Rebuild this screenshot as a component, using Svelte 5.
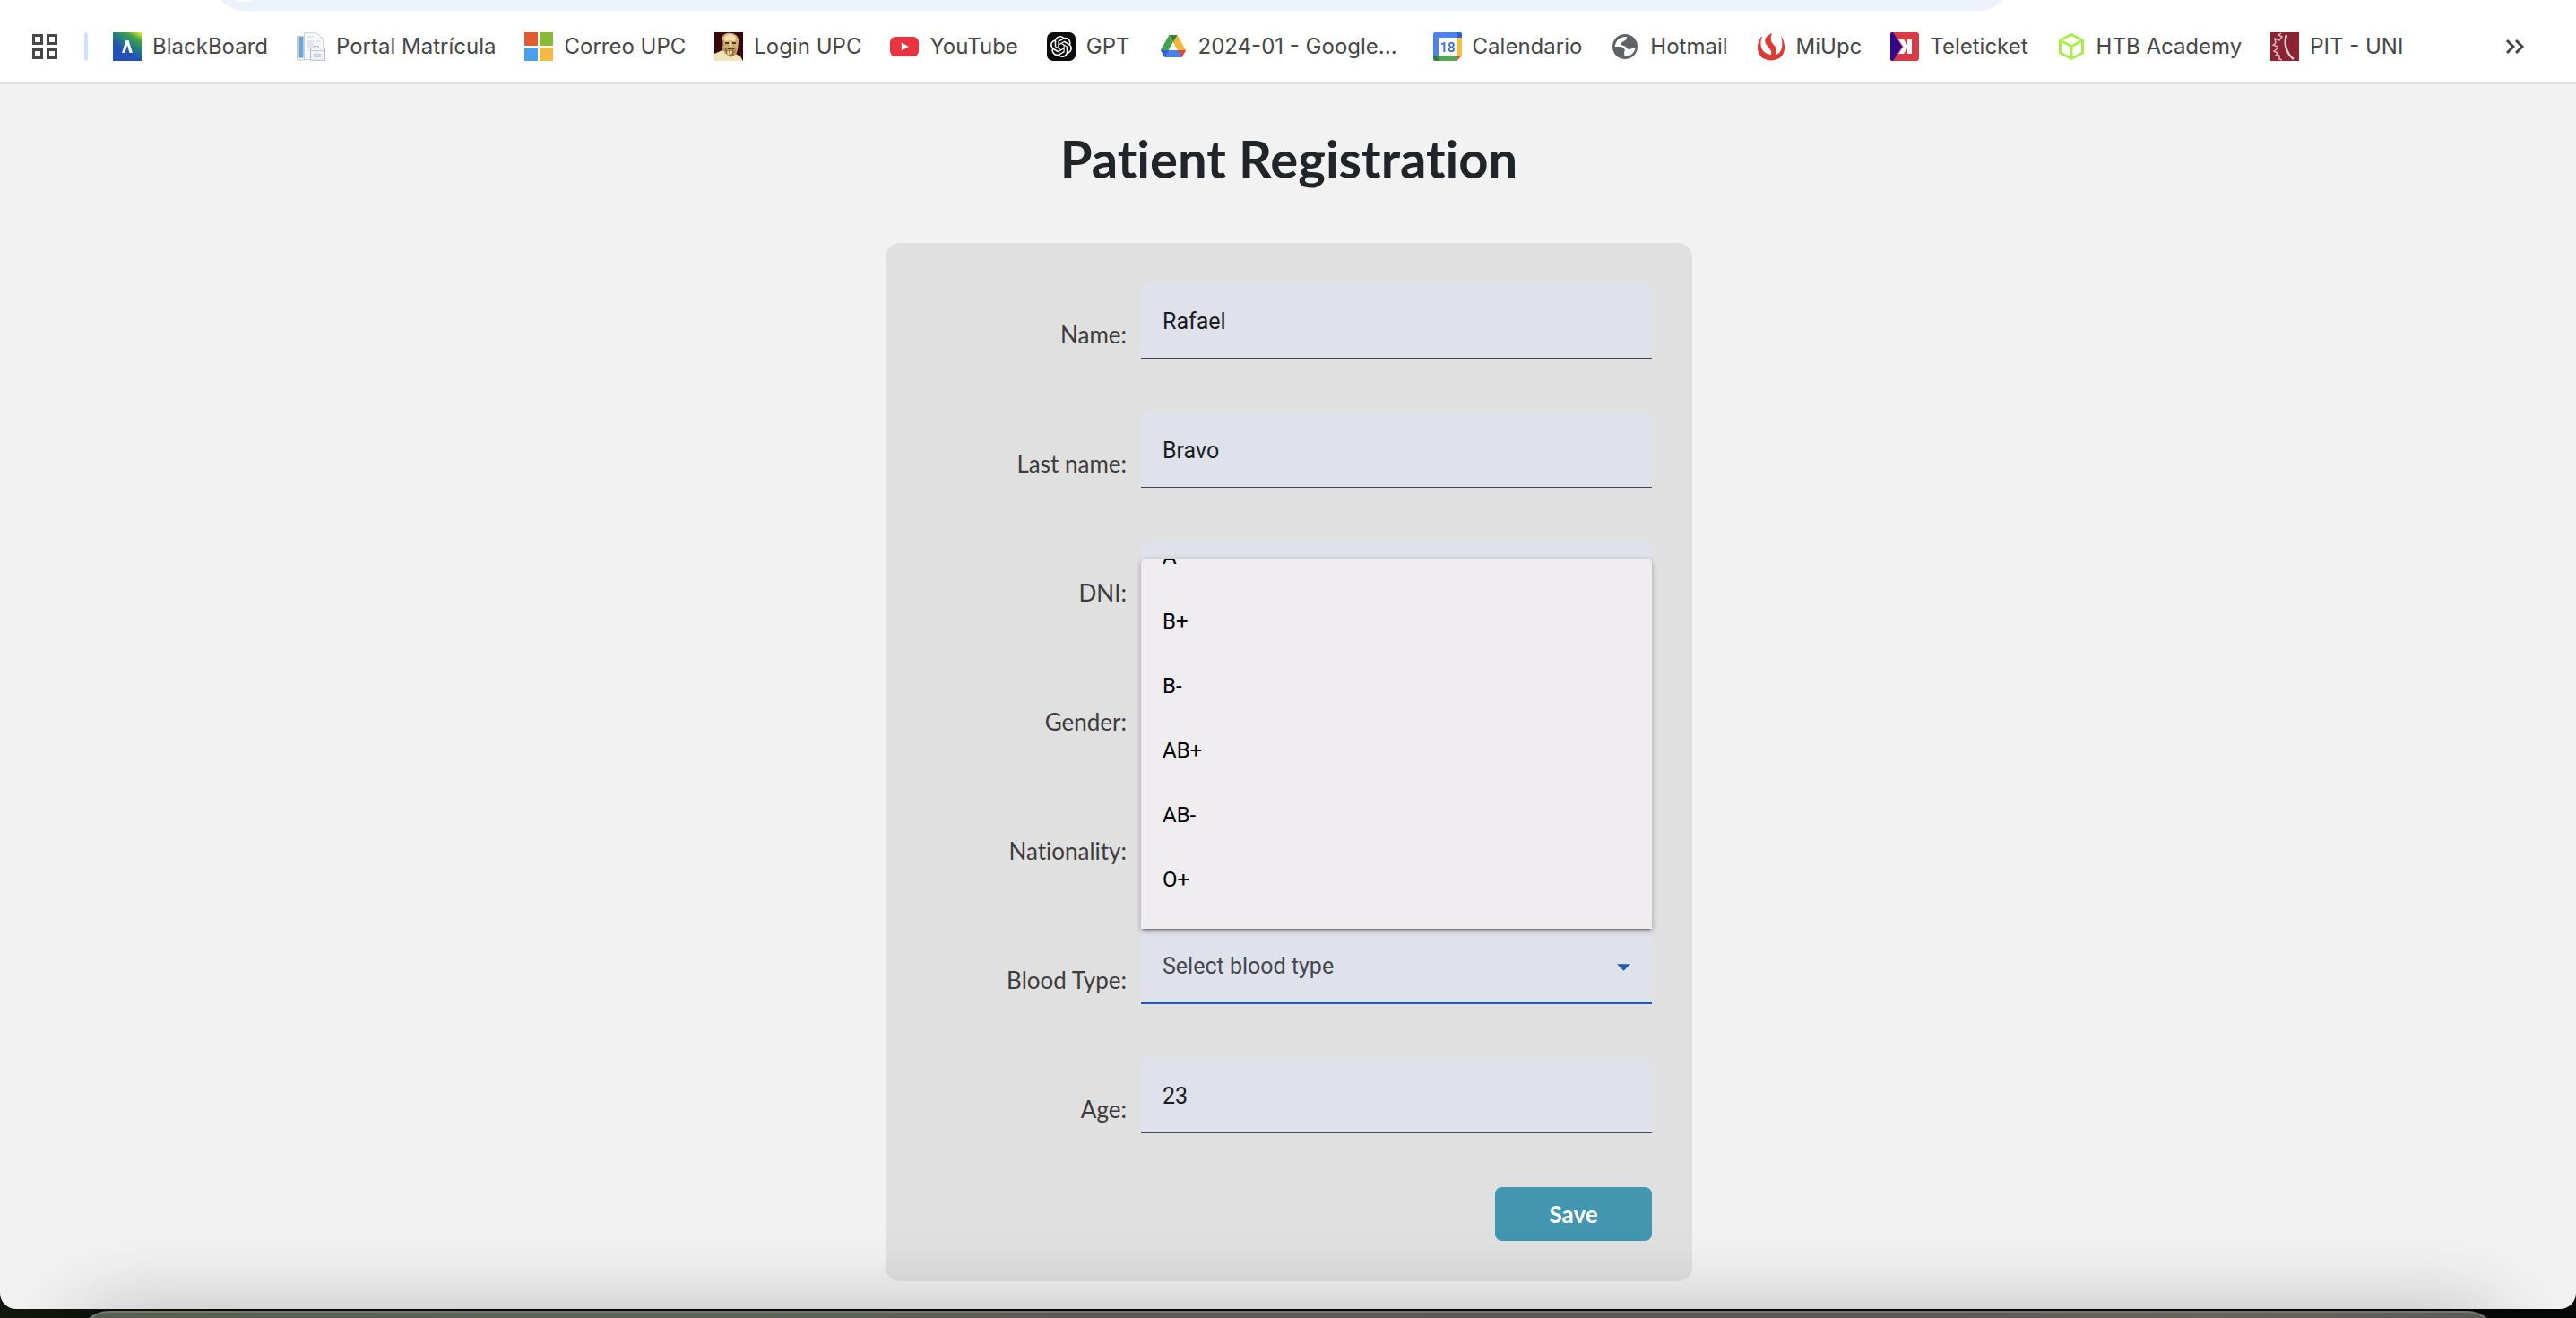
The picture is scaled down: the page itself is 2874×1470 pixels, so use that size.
<script>
  import { onMount } from 'svelte';

  const bookmarks = [
    { icon: 'blackboard', label: 'BlackBoard' },
    { icon: 'portal', label: 'Portal Matrícula' },
    { icon: 'microsoft', label: 'Correo UPC' },
    { icon: 'socrates', label: 'Login UPC' },
    { icon: 'youtube', label: 'YouTube' },
    { icon: 'gpt', label: 'GPT' },
    { icon: 'drive', label: '2024-01 - Google...' },
    { icon: 'calendar', label: 'Calendario' },
    { icon: 'globe', label: 'Hotmail' },
    { icon: 'miupc', label: 'MiUpc' },
    { icon: 'teleticket', label: 'Teleticket' },
    { icon: 'htb', label: 'HTB Academy' },
    { icon: 'uni', label: 'PIT - UNI' }
  ];

  const fields = [
    { id: 'name', label: 'Name:', value: 'Rafael' },
    { id: 'last-name', label: 'Last name:', value: 'Bravo' },
    { id: 'dni', label: 'DNI:', value: '' },
    { id: 'gender', label: 'Gender:', value: '' },
    { id: 'nationality', label: 'Nationality:', value: '' },
    { id: 'blood-type', label: 'Blood Type:', value: '', select: true },
    { id: 'age', label: 'Age:', value: '23' }
  ];

  const bloodTypes = ['A+', 'A-', 'B+', 'B-', 'AB+', 'AB-', 'O+', 'O-'];
  let menu;

  onMount(() => {
    menu.scrollTop = 122;
  });
</script>

{#snippet icon(name)}
  <svg class="icon" viewBox="0 0 32 32" aria-hidden="true">
    {#if name === 'blackboard'}
      <defs>
        <linearGradient id="bb" x1="0.3" y1="1" x2="0.9" y2="0">
          <stop offset="0.3" stop-color="#2150b8" />
          <stop offset="0.55" stop-color="#267c80" />
          <stop offset="0.8" stop-color="#43a047" />
          <stop offset="1" stop-color="#c8e63c" />
        </linearGradient>
      </defs>
      <rect width="32" height="32" fill="url(#bb)" />
      <path d="M10 23 14.5 9h3L22 23h-3.5L16 14l-2.6 9z" fill="#fff" />
    {:else if name === 'portal'}
      <path d="M.5 4.5h8V31H.5z" fill="#f6f7f9" stroke="#c3c8cf" />
      <path d="M2.5 5h5v23.5h-5z" fill="#6fa4d6" />
      <path d="M8.5.7h13l8 6.5v23.3h-21z" fill="#f8f9fb" stroke="#ccd0d8" />
      <path d="M21.5.7v6.5h8z" fill="#fff" stroke="#ccd0d8" />
      <path d="M12 5h7M12 10h6v6h-6zM22 10h5M12 20h2" fill="#e3e6ec" stroke="#e3e6ec" stroke-width="2" />
      <path d="M15.5 17.5h4v-2h5v2h7v13.800h-16z" fill="#f1f2f5" stroke="#b5bac2" />
      <path d="M15.5 20.5h16M19.500 24.500h7v3h-7z" fill="#dcdfe5" stroke="#c6cad1" />
    {:else if name === 'microsoft'}
      <path d="M0 0h15v15H0z" fill="#e25c33" />
      <path d="M17 0h15v15H17z" fill="#8ab935" />
      <path d="M0 17h15v15H0z" fill="#4aa1e9" />
      <path d="M17 17h15v15H17z" fill="#f6ba42" />
    {:else if name === 'socrates'}
      <rect width="32" height="32" fill="#380709" />
      <path d="M0 32v-8l9-4 5 3h8l7 4 3 5z" fill="#f1e3ba" />
      <path d="M8 10C8 3 12 .8 17 .8S28 4 27 11l-1 8-2 6-6 2-6-3-4-7z" fill="#cfae74" />
      <path d="M11 7c1-5 10-7 13-1l-1 4-5-1-6 1z" fill="#f3e0ae" />
      <path d="M8 9l2 2v6l4 1 4-1 7 1-2 7-5 3-5-4-4-7z" fill="#b08a52" />
      <path d="M12 12h4m4 0h4M15 18h7" stroke="#5c3519" stroke-width="2" fill="none" />
      <path d="M12 17l2 6m3-3v6m4-6-1 6M9 9l1 6" stroke="#7a5228" stroke-width="1" />
      <path d="M18 10v6M15 21l1 4m3-4v3" stroke="#ecd49c" stroke-width="2" />
    {:else if name === 'youtube'}
      <rect y="5" width="32" height="22" rx="6" fill="#eb323f" />
      <path d="M12.800 11.500v9l8-4.500z" fill="#fff" />
    {:else if name === 'gpt'}
      <rect width="32" height="32" rx="7" fill="#0b0b0b" />
      <path transform="translate(4 4)" fill="#fff" d="M22.2819 9.8211a5.9847 5.9847 0 0 0-.5157-4.9108 6.0462 6.0462 0 0 0-6.5098-2.9A6.0651 6.0651 0 0 0 4.9807 4.1818a5.9847 5.9847 0 0 0-3.9977 2.9 6.0462 6.0462 0 0 0 .7427 7.0966 5.98 5.98 0 0 0 .511 4.9107 6.051 6.051 0 0 0 6.5146 2.9001A5.9847 5.9847 0 0 0 13.2599 24a6.0557 6.0557 0 0 0 5.7718-4.2058 5.9894 5.9894 0 0 0 3.9977-2.9001 6.0557 6.0557 0 0 0-.7475-7.0729zm-9.022 12.6081a4.4755 4.4755 0 0 1-2.8764-1.0408l.1419-.0804 4.7783-2.7582a.7948.7948 0 0 0 .3927-.6813v-6.7369l2.02 1.1686a.071.071 0 0 1 .038.052v5.5826a4.504 4.504 0 0 1-4.4945 4.4944zm-9.6607-4.1254a4.4708 4.4708 0 0 1-.5346-3.0137l.142.0852 4.783 2.7582a.7712.7712 0 0 0 .7806 0l5.8428-3.3685v2.3324a.0804.0804 0 0 1-.0332.0615L9.74 19.9502a4.4992 4.4992 0 0 1-6.1408-1.6464zM2.3408 7.8956a4.485 4.485 0 0 1 2.3655-1.9728V11.6a.7664.7664 0 0 0 .3879.6765l5.8144 3.3543-2.0201 1.1685a.0757.0757 0 0 1-.071 0l-4.8303-2.7865A4.504 4.504 0 0 1 2.3408 7.872zm16.5963 3.8558L13.1038 8.364 15.1192 7.2a.0757.0757 0 0 1 .071 0l4.8303 2.7913a4.4944 4.4944 0 0 1-.6765 8.1042v-5.6772a.79.79 0 0 0-.407-.667zm2.0107-3.0231l-.142-.0852-4.7735-2.7818a.7759.7759 0 0 0-.7854 0L9.409 9.2297V6.8974a.0662.0662 0 0 1 .0284-.0615l4.8303-2.7866a4.4992 4.4992 0 0 1 6.6802 4.66zM8.3065 12.863l-2.02-1.1638a.0804.0804 0 0 1-.038-.0567V6.0742a4.4992 4.4992 0 0 1 7.3757-3.4537l-.142.0805L8.704 5.459a.7948.7948 0 0 0-.3927.6813zm1.0976-2.3654l2.602-1.4998 2.6069 1.4998v2.9994l-2.5974 1.4997-2.6067-1.4997Z" />
    {:else if name === 'drive'}
      <path d="M11.5 3h9L16 10.5 6.5 27 2 19.5z" fill="#43a253" />
      <path d="M20.5 3 30 20h-9.200L11.500 3.700z" fill="#f5b63a" />
      <path d="M11.5 3h9L16 10.800z" fill="#2a823d" />
      <path d="M2 20h28l-4.500 8h-19z" fill="#4a80ec" />
      <path d="M2 20h9.300l-4.800 8z" fill="#3264d4" />
      <path d="M20.800 20H30l-4.500 8z" fill="#df4937" />
    {:else if name === 'calendar'}
      <path d="M2 0h24v6H6v20H0V2a2 2 0 0 1 2-2z" fill="#4e82ee" />
      <path d="M26 0h4a2 2 0 0 1 2 2v4h-6z" fill="#2b62cb" />
      <path d="M26 6h6v20h-6z" fill="#f2c146" />
      <path d="M6 26h20v6H6z" fill="#53a557" />
      <path d="M0 26h6v6H2a2 2 0 0 1-2-2z" fill="#38803f" />
      <path d="M26 26h6l-6 6z" fill="#df4b3d" />
      <path d="M6 6h20v20H6z" fill="#fff" />
      <text x="16" y="22" text-anchor="middle" class="day">18</text>
    {:else if name === 'globe'}
      <circle cx="16" cy="16" r="14" fill="#5f6368" />
      <path d="M18 5C10 4.500 5 10 4.800 16h6.700c3 1 5 3 4 5s0 4 0 6C22 27 27 23 27.500 17l-4 1c-2 2-5 1-6-1s-4-2-6-3 1-3 3-4 4-2 3.500-5z" fill="#fff" />
    {:else if name === 'miupc'}
      <path d="M5 5C-2 14-1 31 16 31.500 33 31 34 14 27 4c3 10 1 20-6 21 2-4 1-8-2-11-4-4-4-8-2-13-7 3-10 8-6 13 3 4 6 6 5 11-10-1-14-10-10-20z" fill="#dc3a34" />
    {:else if name === 'teleticket'}
      <rect width="32" height="32" rx="3" fill="#d83b46" />
      <path d="M3 0 13 16 3 32H2a2 2 0 0 1-2-2V2a2 2 0 0 1 2-2z" fill="#32058c" />
      <path d="M24 8v16h-5v-6l-4 6H9l5.500-8L9 8h6l4 6V8z" fill="#fff" />
    {:else if name === 'htb'}
      <path d="M16 2.500 28.500 9v14L16 29.500 3.500 23V9zM3.500 9 16 15.800 28.500 9M16 15.800v13.500" fill="none" stroke="#a9ec4b" stroke-width="3" stroke-linejoin="round" />
    {:else if name === 'uni'}
      <rect width="32" height="32" fill="#8a2430" />
      <path d="M12 1 9 3l4 2-3 4-5-2 1 5-3 2 5 2M8 18l-4 3 4 2-2 3 4 0 0 4 3 1" fill="none" stroke="#d9b9bd" stroke-width="1.500" />
      <path d="M18 3c-3 9-1 20 8 27" fill="none" stroke="#e2cdd0" stroke-width="2.500" />
    {/if}
  </svg>
{/snippet}

<div class="shell">
  <div class="window">
    <div class="toolbar">
      <div class="omnibox"><span class="site-info"></span></div>
    </div>

    <nav class="bookmarks" aria-label="Bookmarks">
      <button class="plain" aria-label="Apps">
        <svg class="icon" viewBox="0 0 32 32">
          <path d="M3.500 3.500h9v9h-9zM19.500 3.500h9v9h-9zM3.500 19.500h9v9h-9zM19.500 19.500h9v9h-9z" fill="none" stroke="#474747" stroke-width="3" />
        </svg>
      </button>
      <span class="separator"></span>
      <div class="links">
        {#each bookmarks as mark}
          <a href="#{mark.icon}">{@render icon(mark.icon)}<span>{mark.label}</span></a>
        {/each}
      </div>
      <button class="plain" aria-label="More bookmarks">
        <svg class="icon" viewBox="0 0 32 32">
          <path d="m7 9 7 7-7 7M17 9l7 7-7 7" fill="none" stroke="#474747" stroke-width="3" />
        </svg>
      </button>
    </nav>

    <main>
      <h1>Patient Registration</h1>
      <form onsubmit={(event) => event.preventDefault()}>
        {#each fields as field}
          <div class="row">
            <label for={field.id}>{field.label}</label>
            {#if field.select}
              <div class="control">
                <select id={field.id}>
                  <option value="">Select blood type</option>
                  {#each bloodTypes as type}
                    <option>{type}</option>
                  {/each}
                </select>
                <svg class="arrow" viewBox="0 0 16 8" aria-hidden="true"><path d="M0 0h16L8 8z" fill="#225ab7" /></svg>
                <ul class="menu" role="listbox" aria-label="Blood type" bind:this={menu}>
                  {#each bloodTypes as type}
                    <li role="option" aria-selected="false">{type}</li>
                  {/each}
                </ul>
              </div>
            {:else}
              <div class="control"><input id={field.id} type="text" value={field.value} /></div>
            {/if}
          </div>
        {/each}
        <button class="save" type="submit">Save</button>
      </form>
    </main>
  </div>
  <div class="desktop"><div class="dock"></div></div>
</div>

<style>
  :global(body) {
    margin: 0;
    background: #080b08;
  }
  .shell,
  .shell * {
    box-sizing: border-box;
  }
  .shell {
    display: flex;
    flex-direction: column;
    min-height: 100vh;
    overflow: hidden;
    background: linear-gradient(90deg, #12170f, #070b06 10%, #040706);
  }
  .window {
    flex: 1;
    background: #f2f2f2;
    border-radius: 0 0 18px 18px;
    overflow: hidden;
  }
  .toolbar {
    height: 12px;
    display: flex;
    align-items: flex-end;
    background: #fff;
    padding: 0 632px 0 238px;
  }
  .omnibox {
    flex: 1;
    height: 68px;
    padding: 10px;
    border-radius: 34px;
    background: #edf1fa;
  }
  .site-info {
    display: block;
    width: 48px;
    height: 48px;
    border-radius: 50%;
    background: #fff;
  }
  .bookmarks {
    display: flex;
    align-items: center;
    height: 82px;
    padding: 0 52px 0 34px;
    background: #fff;
    border-bottom: 2px solid #e0e0e0;
  }
  .icon {
    display: block;
    width: 32px;
    height: 32px;
    flex: none;
  }
  .day {
    font: 500 15px Roboto, sans-serif;
    fill: #3267d6;
  }
  .plain {
    padding: 0;
    border: 0;
    background: none;
  }
  .separator {
    width: 4px;
    height: 32px;
    margin: 0 28px;
    border-radius: 2px;
    background: #d3e0fb;
  }
  .links {
    flex: 1;
    display: flex;
    gap: 32px;
  }
  .links a {
    display: flex;
    align-items: center;
    gap: 12px;
    color: #474747;
    font: 24px/32px Inter, sans-serif;
    text-decoration: none;
    white-space: nowrap;
  }
  .links a:nth-child(7) {
    min-width: 274px;
  }
  main {
    padding: 48px 22px 31px 24px;
  }
  h1 {
    margin: 0 0 59px;
    text-align: center;
    color: #212529;
    font: 700 58px/70px Lato, sans-serif;
    font-variant-ligatures: none;
  }
  form {
    display: flex;
    flex-direction: column;
    gap: 60px;
    max-width: 900px;
    margin: 0 auto;
    padding: 45px;
    border-radius: 16px;
    background: #e0e0e0;
  }
  .row {
    display: grid;
    grid-template-columns: 1fr 570px;
    gap: 16px;
  }
  label {
    padding-top: 41px;
    text-align: right;
    color: #3c3c3c;
    font: 26px/32px Lato, sans-serif;
    font-variant-ligatures: none;
  }
  .control {
    position: relative;
  }
  input,
  select {
    display: block;
    width: 100%;
    height: 84px;
    padding: 1px 24px 0;
    border: 0;
    border-bottom: 1px solid #44474e;
    border-radius: 6px 6px 0 0;
    outline: 0;
    background: #dfe2eb;
    color: #1a1b1f;
    font: 25px/36px Roboto, sans-serif;
    appearance: none;
  }
  select {
    padding-top: 3px;
    border-bottom: 3px solid #225ab7;
    color: #44474e;
  }
  .arrow {
    position: absolute;
    right: 24px;
    top: 39px;
    width: 15px;
    height: 8px;
  }
  .menu {
    position: absolute;
    left: 0;
    right: 0;
    bottom: 100%;
    height: 413px;
    margin: 0;
    padding: 12px 0;
    overflow-y: auto;
    scrollbar-width: none;
    list-style: none;
    border-radius: 6px 6px 0 0;
    background: #efedf0;
    box-shadow: 0 3px 2px -2px rgba(0, 0, 0, 0.4), 0 2px 6px rgba(0, 0, 0, 0.3);
  }
  .menu li {
    padding: 0 24px;
    color: #000;
    font: 24px/72px Roboto, sans-serif;
  }
  .save {
    align-self: flex-end;
    width: 175px;
    height: 60px;
    border: 0;
    border-radius: 8px;
    background: #4296b0;
    color: #fff;
    font: 700 26px/32px Lato, sans-serif;
  }
  .desktop {
    position: relative;
    z-index: 1;
    height: 10px;
    padding: 2px 86px 0;
    pointer-events: none;
  }
  .dock {
    height: 90px;
    border: 2px solid #73786e;
    border-radius: 36px;
    background: linear-gradient(90deg, #565f53, #5f6355 25%, #5d5855 45%, #5b5655 75%, #6a655a 88%, #5a5a5a);
    box-shadow: 0 0 90px rgba(0, 0, 0, 0.24);
  }
</style>
